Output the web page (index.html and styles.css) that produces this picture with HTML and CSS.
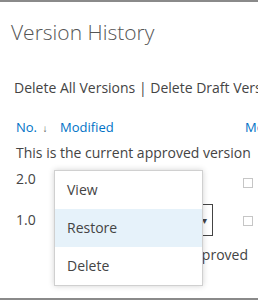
FILE: index.html
```html
<!DOCTYPE html>
<html lang="en">
<head>
    <meta charset="UTF-8">
    <title>Version History</title>
    <link rel="stylesheet" href="styles.css">
</head>
<body>
<div class="dialog">
    <h1 class="title">Version History</h1>

    <div class="actions">
        <a href="#">Delete All Versions</a> | <a href="#">Delete Draft Versions</a>
    </div>

    <div class="grid">
        <div class="row head">
            <span class="col-no">No. <span class="sort">&#8595;</span></span>
            <span class="col-mod">Modified</span>
            <span class="col-by">Modified By</span>
        </div>
        <div class="row note">This is the current approved version</div>
        <div class="row first">
            <span class="col-no">2.0</span>
            <span class="col-mod"><a href="#">10/2/2013 4:12 PM</a></span>
            <span class="col-by"><span class="check"></span></span>
        </div>
        <div class="row">
            <span class="col-no">1.0</span>
            <span class="col-mod"><span class="picker">10/1/2013 9:30 AM <span class="caret">&#9662;</span></span></span>
            <span class="col-by"><span class="check"></span></span>
        </div>
        <div class="row note indent">This version was approved</div>
    </div>

    <ul class="menu">
        <li>View</li>
        <li class="active">Restore</li>
        <li>Delete</li>
    </ul>
</div>
</body>
</html>
```

FILE: styles.css
```css
* {
    margin: 0;
    padding: 0;
    box-sizing: border-box;
}

body {
    font-family: 'Open Sans', 'Liberation Sans', sans-serif;
    font-size: 14px;
    color: #444;
    background: #fff;
    overflow: hidden;
}

a {
    color: #444;
    text-decoration: none;
}

.dialog {
    position: relative;
    height: 300px;
    border-top: 2px solid #8a8a8a;
    border-bottom: 2px solid #8a8a8a;
    white-space: nowrap;
    overflow: hidden;
}

.title {
    font-size: 21px;
    font-weight: 300;
    color: #555;
    padding: 15px 0 0 11px;
    line-height: 30px;
}

.actions {
    padding: 31px 0 0 14px;
    line-height: 20px;
}

.grid {
    padding: 19px 0 0 16px;
}

.row {
    display: flex;
    align-items: center;
    height: 32px;
    line-height: 20px;
}

.row > span {
    flex-shrink: 0;
}

.row.head {
    height: 20px;
    color: #0072c6;
    font-size: 13px;
}

.row.first {
    height: 35px;
    align-items: flex-start;
}

.row.note {
    height: 32px;
}

.row.indent {
    height: 38px;
    padding-left: 59px;
}

.col-no {
    width: 44px;
}

.col-mod {
    width: 183px;
}

.head .col-by {
    padding-left: 2px;
}

.sort {
    font-size: 10px;
    color: #555;
    margin-left: 2px;
}

.picker {
    display: inline-flex;
    align-items: center;
    justify-content: space-between;
    width: 153px;
    height: 32px;
    padding: 0 5px 0 4px;
    border: 1px solid #444;
}

.caret {
    font-size: 10px;
}

.check {
    display: inline-block;
    width: 10px;
    height: 10px;
    border: 1px solid #c6c6c6;
    vertical-align: middle;
}

.first .check {
    margin-top: 6px;
}

.menu {
    position: absolute;
    left: 54px;
    top: 168px;
    width: 149px;
    list-style: none;
    background: #fff;
    border: 1px solid #d0d0d0;
    box-shadow: 0 0 6px rgba(0, 0, 0, 0.18);
    font-size: 14px;
}

.menu li {
    height: 38px;
    line-height: 38px;
    padding-left: 12px;
}

.menu li.active {
    background: #e6f2fa;
}
```
